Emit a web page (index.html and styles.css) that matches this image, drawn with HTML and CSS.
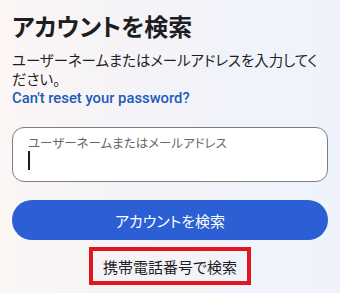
FILE: index.html
```html
<!DOCTYPE html>
<html lang="ja">
<head>
<meta charset="utf-8">
<link rel="stylesheet" href="styles.css">
</head>
<body>
<main class="page">
  <h1 class="title">アカウントを検索</h1>
  <p class="desc">ユーザーネームまたはメールアドレスを入力してください。</p>
  <a class="link" href="#">Can't reset your password?</a>
  <div class="field">
    <div class="label">ユーザーネームまたはメールアドレス</div>
    <div class="caret"></div>
  </div>
  <button class="primary">アカウントを検索</button>
  <div class="alt-wrap">
    <div class="alt">携帯電話番号で検索</div>
  </div>
</main>
</body>
</html>
```
FILE: styles.css
```css
html, body {
  margin: 0;
  padding: 0;
}
body {
  width: 340px;
  height: 293px;
  overflow: hidden;
  background: linear-gradient(90deg, #fcf6f5 0%, #f4f3f8 45%, #eef3fc 100%);
  font-family: "Noto Sans CJK JP", "Noto Sans", sans-serif;
  color: #1c1e21;
}
.page {
  padding: 10px 12px 0 12px;
  display: flex;
  flex-direction: column;
}
.title {
  margin: 0;
  font-size: 24px;
  font-weight: 700;
  line-height: 32px;
  font-feature-settings: "palt";
}
.desc {
  margin: 8px 0 0 0;
  font-size: 14.4px;
  line-height: 19px;
  font-weight: 400;
  color: #1c1e21;
  font-feature-settings: "palt";
}
.link {
  margin-top: 1px;
  font-family: "Roboto", "Noto Sans", sans-serif;
  font-size: 14.8px;
  line-height: 18px;
  font-weight: 500;
  color: #1d5bb5;
  text-decoration: none;
}
.field {
  margin-top: 20px;
  height: 55px;
  border: 1px solid #7a7d83;
  border-radius: 12px;
  background: #ffffff;
  padding: 7px 15px 0 15px;
  box-sizing: border-box;
}
.label {
  font-size: 12.5px;
  line-height: 16px;
  color: #65676b;
  font-feature-settings: "palt";
}
.caret {
  margin-top: 0;
  width: 2px;
  height: 19px;
  background: #1c1e21;
}
.primary {
  margin-top: 18px;
  height: 40px;
  border: none;
  border-radius: 20px;
  background: #2b5fd3;
  color: #ffffff;
  font-family: "Noto Sans CJK JP", "Noto Sans", sans-serif;
  font-size: 15px;
  font-feature-settings: "palt";
  padding: 0;
}
.alt-wrap {
  display: flex;
  justify-content: center;
  margin-top: 7px;
}
.alt {
  border: 4px solid #e3161d;
  width: 154px;
  height: 30px;
  display: flex;
  align-items: center;
  justify-content: center;
  font-size: 15px;
  color: #1c1e21;
  font-feature-settings: "palt";
}
```
